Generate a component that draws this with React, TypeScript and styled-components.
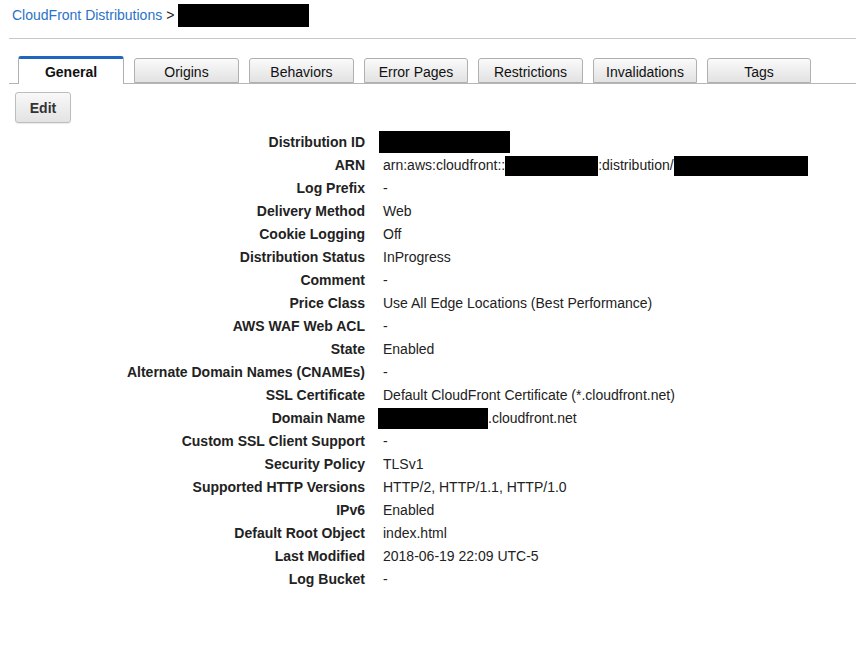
import styled, { createGlobalStyle } from "styled-components";

const GlobalStyle = createGlobalStyle`
  html, body {
    margin: 0;
    padding: 0;
    background: #ffffff;
  }
  body {
    font-family: "Liberation Sans", Arial, Helvetica, sans-serif;
    font-size: 14px;
    color: #222222;
  }
`;

const Page = styled.div`
  padding: 0 0 0 9px;
`;

const Breadcrumb = styled.div`
  display: flex;
  align-items: center;
  height: 30px;
  padding-left: 3px;
  border-bottom: 1px solid #c8c8c8;
  margin-bottom: 17px;
  margin-top: 0;
  padding-bottom: 8px;
  box-sizing: content-box;
`;

const CrumbLink = styled.a`
  color: #2a72c9;
  text-decoration: none;
  font-size: 14px;
`;

const CrumbSep = styled.span`
  color: #222;
  margin: 0 4px 0 4px;
`;

const Redacted = styled.span<{ $w: number; $h?: number }>`
  display: inline-block;
  width: ${(p) => p.$w}px;
  height: ${(p) => p.$h ?? 22}px;
  background: #000;
  vertical-align: middle;
`;

const TabStrip = styled.div`
  display: flex;
  align-items: flex-end;
  gap: 10px;
  padding-left: 9px;
  height: 27px;
  border-bottom: 1px solid #b5b5b5;
`;

const Tab = styled.div<{ $active?: boolean; $w: number }>`
  box-sizing: border-box;
  width: ${(p) => p.$w}px;
  height: ${(p) => (p.$active ? 28 : 25)}px;
  margin-bottom: ${(p) => (p.$active ? -1 : 0)}px;
  display: flex;
  align-items: center;
  justify-content: center;
  font-size: 14px;
  color: #111;
  font-weight: ${(p) => (p.$active ? 700 : 400)};
  border: 1px solid #b0b0b0;
  border-bottom: ${(p) => (p.$active ? "none" : "1px solid #b0b0b0")};
  border-top: ${(p) => (p.$active ? "3px solid #1f66c1" : "1px solid #b0b0b0")};
  border-radius: 3px 3px 0 0;
  background: ${(p) =>
    p.$active ? "#ffffff" : "linear-gradient(#fafafa, #e2e2e2)"};
  padding-top: ${(p) => (p.$active ? 0 : 2)}px;
`;

const Toolbar = styled.div`
  padding: 8px 0 0 6px;
`;

const Button = styled.button`
  box-sizing: border-box;
  width: 56px;
  height: 31px;
  font-family: "Liberation Sans", Arial, Helvetica, sans-serif;
  font-size: 14px;
  font-weight: 700;
  color: #333;
  border: 1px solid #bdbdbd;
  border-radius: 3px;
  background: linear-gradient(#f8f8f8, #e3e3e3);
  box-shadow: 0 1px 1px rgba(0, 0, 0, 0.08);
  cursor: pointer;
`;

const Details = styled.dl`
  display: grid;
  grid-template-columns: 356px 1fr;
  column-gap: 18px;
  margin: 8px 0 0 0;
`;

const Label = styled.dt`
  text-align: right;
  font-weight: 700;
  color: #222;
  height: 23px;
  line-height: 23px;
  white-space: nowrap;
`;

const Value = styled.dd`
  margin: 0;
  height: 23px;
  line-height: 23px;
  color: #222;
  white-space: nowrap;
  display: flex;
  align-items: center;
`;

const tabs = [
  { name: "General", w: 106, active: true },
  { name: "Origins", w: 105 },
  { name: "Behaviors", w: 105 },
  { name: "Error Pages", w: 104 },
  { name: "Restrictions", w: 105 },
  { name: "Invalidations", w: 104 },
  { name: "Tags", w: 104 },
];

type Row = { label: string; value: React.ReactNode };

const rows: Row[] = [
  { label: "Distribution ID", value: <Redacted $w={131} style={{ marginLeft: -4, marginTop: -2 }} /> },
  {
    label: "ARN",
    value: (
      <>
        arn:aws:cloudfront::
        <Redacted $w={93} $h={20} />
        :distribution/
        <Redacted $w={134} $h={20} />
      </>
    ),
  },
  { label: "Log Prefix", value: "-" },
  { label: "Delivery Method", value: "Web" },
  { label: "Cookie Logging", value: "Off" },
  { label: "Distribution Status", value: "InProgress" },
  { label: "Comment", value: "-" },
  { label: "Price Class", value: "Use All Edge Locations (Best Performance)" },
  { label: "AWS WAF Web ACL", value: "-" },
  { label: "State", value: "Enabled" },
  { label: "Alternate Domain Names (CNAMEs)", value: "-" },
  { label: "SSL Certificate", value: "Default CloudFront Certificate (*.cloudfront.net)" },
  {
    label: "Domain Name",
    value: (
      <>
        <Redacted $w={110} $h={21} style={{ marginLeft: -5 }} />
        .cloudfront.net
      </>
    ),
  },
  { label: "Custom SSL Client Support", value: "-" },
  { label: "Security Policy", value: "TLSv1" },
  { label: "Supported HTTP Versions", value: "HTTP/2, HTTP/1.1, HTTP/1.0" },
  { label: "IPv6", value: "Enabled" },
  { label: "Default Root Object", value: "index.html" },
  { label: "Last Modified", value: "2018-06-19 22:09 UTC-5" },
  { label: "Log Bucket", value: "-" },
];

export default function App() {
  return (
    <>
      <GlobalStyle />
      <Page>
        <Breadcrumb>
          <CrumbLink href="#">CloudFront Distributions</CrumbLink>
          <CrumbSep>&gt;</CrumbSep>
          <Redacted $w={131} $h={23} />
        </Breadcrumb>
        <TabStrip>
          {tabs.map((t) => (
            <Tab key={t.name} $active={t.active} $w={t.w}>
              {t.name}
            </Tab>
          ))}
        </TabStrip>
        <Toolbar>
          <Button>Edit</Button>
        </Toolbar>
        <Details>
          {rows.map((r) => (
            <>
              <Label key={r.label + "-l"}>{r.label}</Label>
              <Value key={r.label + "-v"}>{r.value}</Value>
            </>
          ))}
        </Details>
      </Page>
    </>
  );
}
